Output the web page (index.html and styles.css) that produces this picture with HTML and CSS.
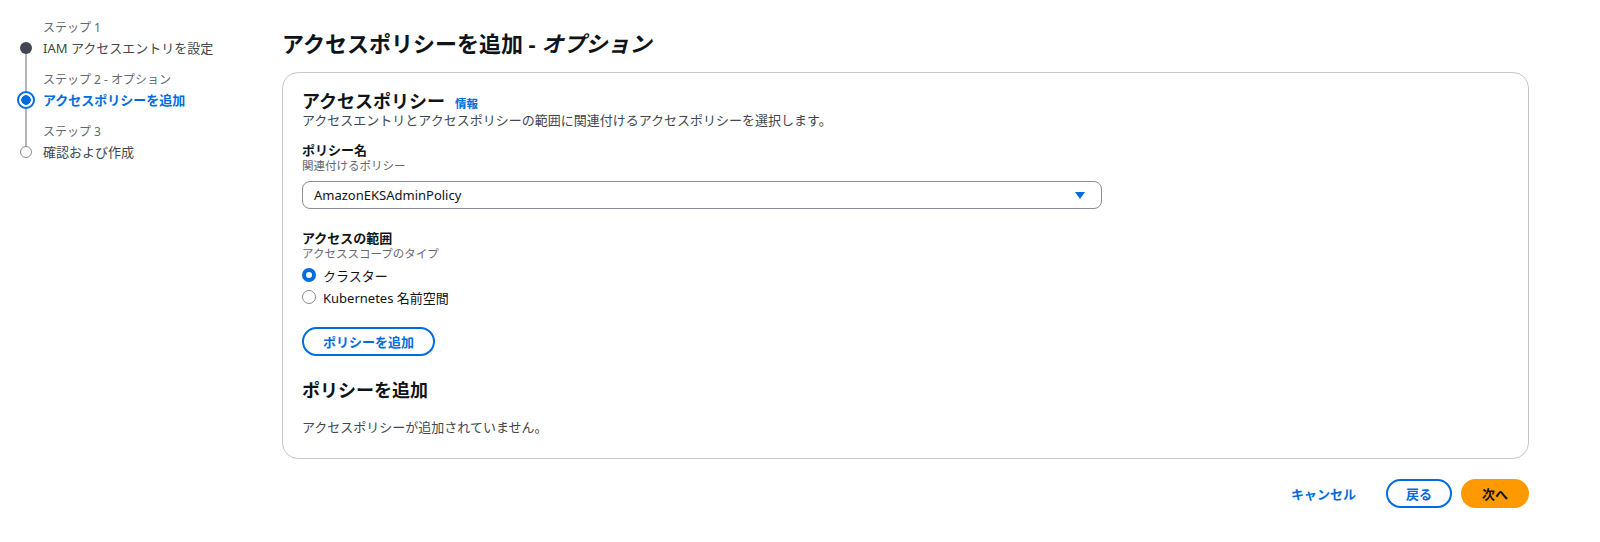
FILE: index.html
```html
<!DOCTYPE html>
<html lang="ja">
<head>
<meta charset="UTF-8">
<meta name="viewport" content="width=device-width, initial-scale=1.0">
<title>アクセスポリシーを追加</title>
<link rel="stylesheet" href="styles.css">
</head>
<body>
<div class="page">
    <nav class="wizard-nav">
        <ol class="steps">
            <li class="step done">
                <span class="rail"><span class="line-top"></span><span class="dot"></span><span class="line-bottom"></span></span>
                <span class="step-label">ステップ 1</span>
                <span class="step-title">IAM アクセスエントリを設定</span>
            </li>
            <li class="step active">
                <span class="rail"><span class="line-top"></span><span class="dot"></span><span class="line-bottom"></span></span>
                <span class="step-label">ステップ 2 - オプション</span>
                <span class="step-title">アクセスポリシーを追加</span>
            </li>
            <li class="step todo">
                <span class="rail"><span class="line-top"></span><span class="dot"></span><span class="line-bottom"></span></span>
                <span class="step-label">ステップ 3</span>
                <span class="step-title">確認および作成</span>
            </li>
        </ol>
    </nav>

    <main class="content">
        <h1 class="page-title">アクセスポリシーを追加 - <i>オプション</i></h1>

        <section class="card">
            <div class="card-head">
                <h2 class="card-title">アクセスポリシー</h2>
                <a class="info-link" href="#">情報</a>
            </div>
            <p class="card-desc">アクセスエントリとアクセスポリシーの範囲に関連付けるアクセスポリシーを選択します。</p>

            <div class="field">
                <div class="field-label">ポリシー名</div>
                <div class="field-hint">関連付けるポリシー</div>
                <div class="select">
                    <span>AmazonEKSAdminPolicy</span>
                    <svg class="caret" width="10" height="7" viewBox="0 0 10 7"><path d="M0 0h10L5 7z" fill="#006ce0"/></svg>
                </div>
            </div>

            <div class="field scope">
                <div class="field-label">アクセスの範囲</div>
                <div class="field-hint">アクセススコープのタイプ</div>
                <div class="radios">
                    <label class="radio"><span class="radio-mark checked"></span>クラスター</label>
                    <label class="radio"><span class="radio-mark"></span>Kubernetes 名前空間</label>
                </div>
            </div>

            <button class="btn btn-normal add-btn">ポリシーを追加</button>

            <h2 class="card-title added-title">ポリシーを追加</h2>
            <p class="empty">アクセスポリシーが追加されていません。</p>
        </section>

        <div class="footer-actions">
            <button class="btn btn-link">キャンセル</button>
            <button class="btn btn-normal">戻る</button>
            <button class="btn btn-primary">次へ</button>
        </div>
    </main>
</div>
</body>
</html>
```

FILE: styles.css
```css
body {
    margin: 0;
    font-family: "Noto Sans", "Noto Sans CJK JP", sans-serif;
    color: #0f141a;
    background: #fff;
    font-size: 13px;
}

.page {
    display: flex;
    align-items: flex-start;
}

/* wizard steps */
.wizard-nav {
    width: 265px;
    padding: 18px 0 0 17px;
    flex-shrink: 0;
}

.steps {
    list-style: none;
    margin: 0;
    padding: 0;
}

.step {
    display: grid;
    grid-template-columns: 18px 1fr;
    grid-template-rows: auto 20px;
    column-gap: 8px;
}

.step + .step .step-label {
    padding-top: 12px;
}

.rail {
    grid-column: 1;
    grid-row: 1 / 3;
    display: flex;
    flex-direction: column;
    align-items: center;
}

.line-top {
    flex: 1;
    width: 2px;
    background: #b4b4bb;
}

.line-bottom {
    width: 2px;
    height: 4px;
    background: #b4b4bb;
}

.step:first-child .line-top {
    background: transparent;
}

.step:last-child .line-bottom {
    background: transparent;
}

.dot {
    box-sizing: border-box;
    width: 12px;
    height: 12px;
    border-radius: 50%;
}

.done .dot {
    background: #424650;
}

.active .dot {
    width: 18px;
    height: 18px;
    border: 2px solid #006ce0;
    background: radial-gradient(circle, #006ce0 0 4.5px, #fff 5px);
}

.active .line-bottom {
    height: 1px;
}

.todo .dot {
    border: 1px solid #8c8c94;
    background: #fff;
}

.step-label {
    grid-column: 2;
    font-size: 12px;
    line-height: 20px;
    color: #656871;
}

.step-title {
    grid-column: 2;
    font-size: 13px;
    line-height: 20px;
    color: #424650;
}

.active .step-title {
    color: #006ce0;
    font-weight: 700;
}

/* main */
.content {
    flex: 1;
    padding: 28px 71px 0 0;
}

.page-title {
    margin: 0 0 14px;
    font-size: 22px;
    line-height: 30px;
    font-weight: 700;
}

.card {
    border: 1px solid #c6c6cd;
    border-radius: 16px;
    padding: 18px 19px 22px;
}

.card-head {
    display: flex;
    align-items: baseline;
    gap: 10px;
}

.card-title {
    margin: 0;
    font-size: 18px;
    line-height: 20px;
    font-weight: 700;
}

.info-link {
    font-size: 11.5px;
    font-weight: 700;
    color: #006ce0;
    text-decoration: none;
}

.card-desc {
    margin: 0;
    line-height: 18px;
    color: #424650;
}

.field {
    margin-top: 12px;
}

.field-label {
    font-weight: 700;
    line-height: 18px;
}

.field-hint {
    font-size: 11.5px;
    line-height: 14px;
    color: #656871;
}

.select {
    margin-top: 8px;
    width: 800px;
    height: 28px;
    box-sizing: border-box;
    border: 1.5px solid #8c8c94;
    border-radius: 8px;
    display: flex;
    align-items: center;
    justify-content: space-between;
    padding: 0 16px 0 11px;
}

.scope {
    margin-top: 20px;
}

.radios {
    margin-top: 3px;
}

.radio {
    display: flex;
    align-items: center;
    gap: 7px;
    height: 22px;
}

.radio-mark {
    box-sizing: border-box;
    width: 14px;
    height: 14px;
    border-radius: 50%;
    border: 1.5px solid #8c8c94;
}

.radio-mark.checked {
    border: 4px solid #006ce0;
}

.btn {
    font-family: inherit;
    font-size: 13px;
    font-weight: 700;
    height: 29px;
    padding: 0 18px;
    border-radius: 20px;
    border: 2px solid transparent;
    background: none;
    cursor: pointer;
}

.btn-normal {
    border-color: #006ce0;
    color: #006ce0;
    background: #fff;
}

.btn-link {
    color: #006ce0;
    padding: 0 19px;
}

.btn-primary {
    background: #ff9900;
    border-color: #ff9900;
    color: #0f141a;
    padding: 0 19px;
}

.add-btn {
    margin-top: 19px;
    width: 133px;
}

.added-title {
    margin-top: 23px;
    line-height: 22px;
}

.empty {
    margin: 17px 0 0;
    line-height: 18px;
    color: #424650;
}

.footer-actions {
    display: flex;
    justify-content: flex-end;
    gap: 9px;
    margin-top: 20px;
}
```
